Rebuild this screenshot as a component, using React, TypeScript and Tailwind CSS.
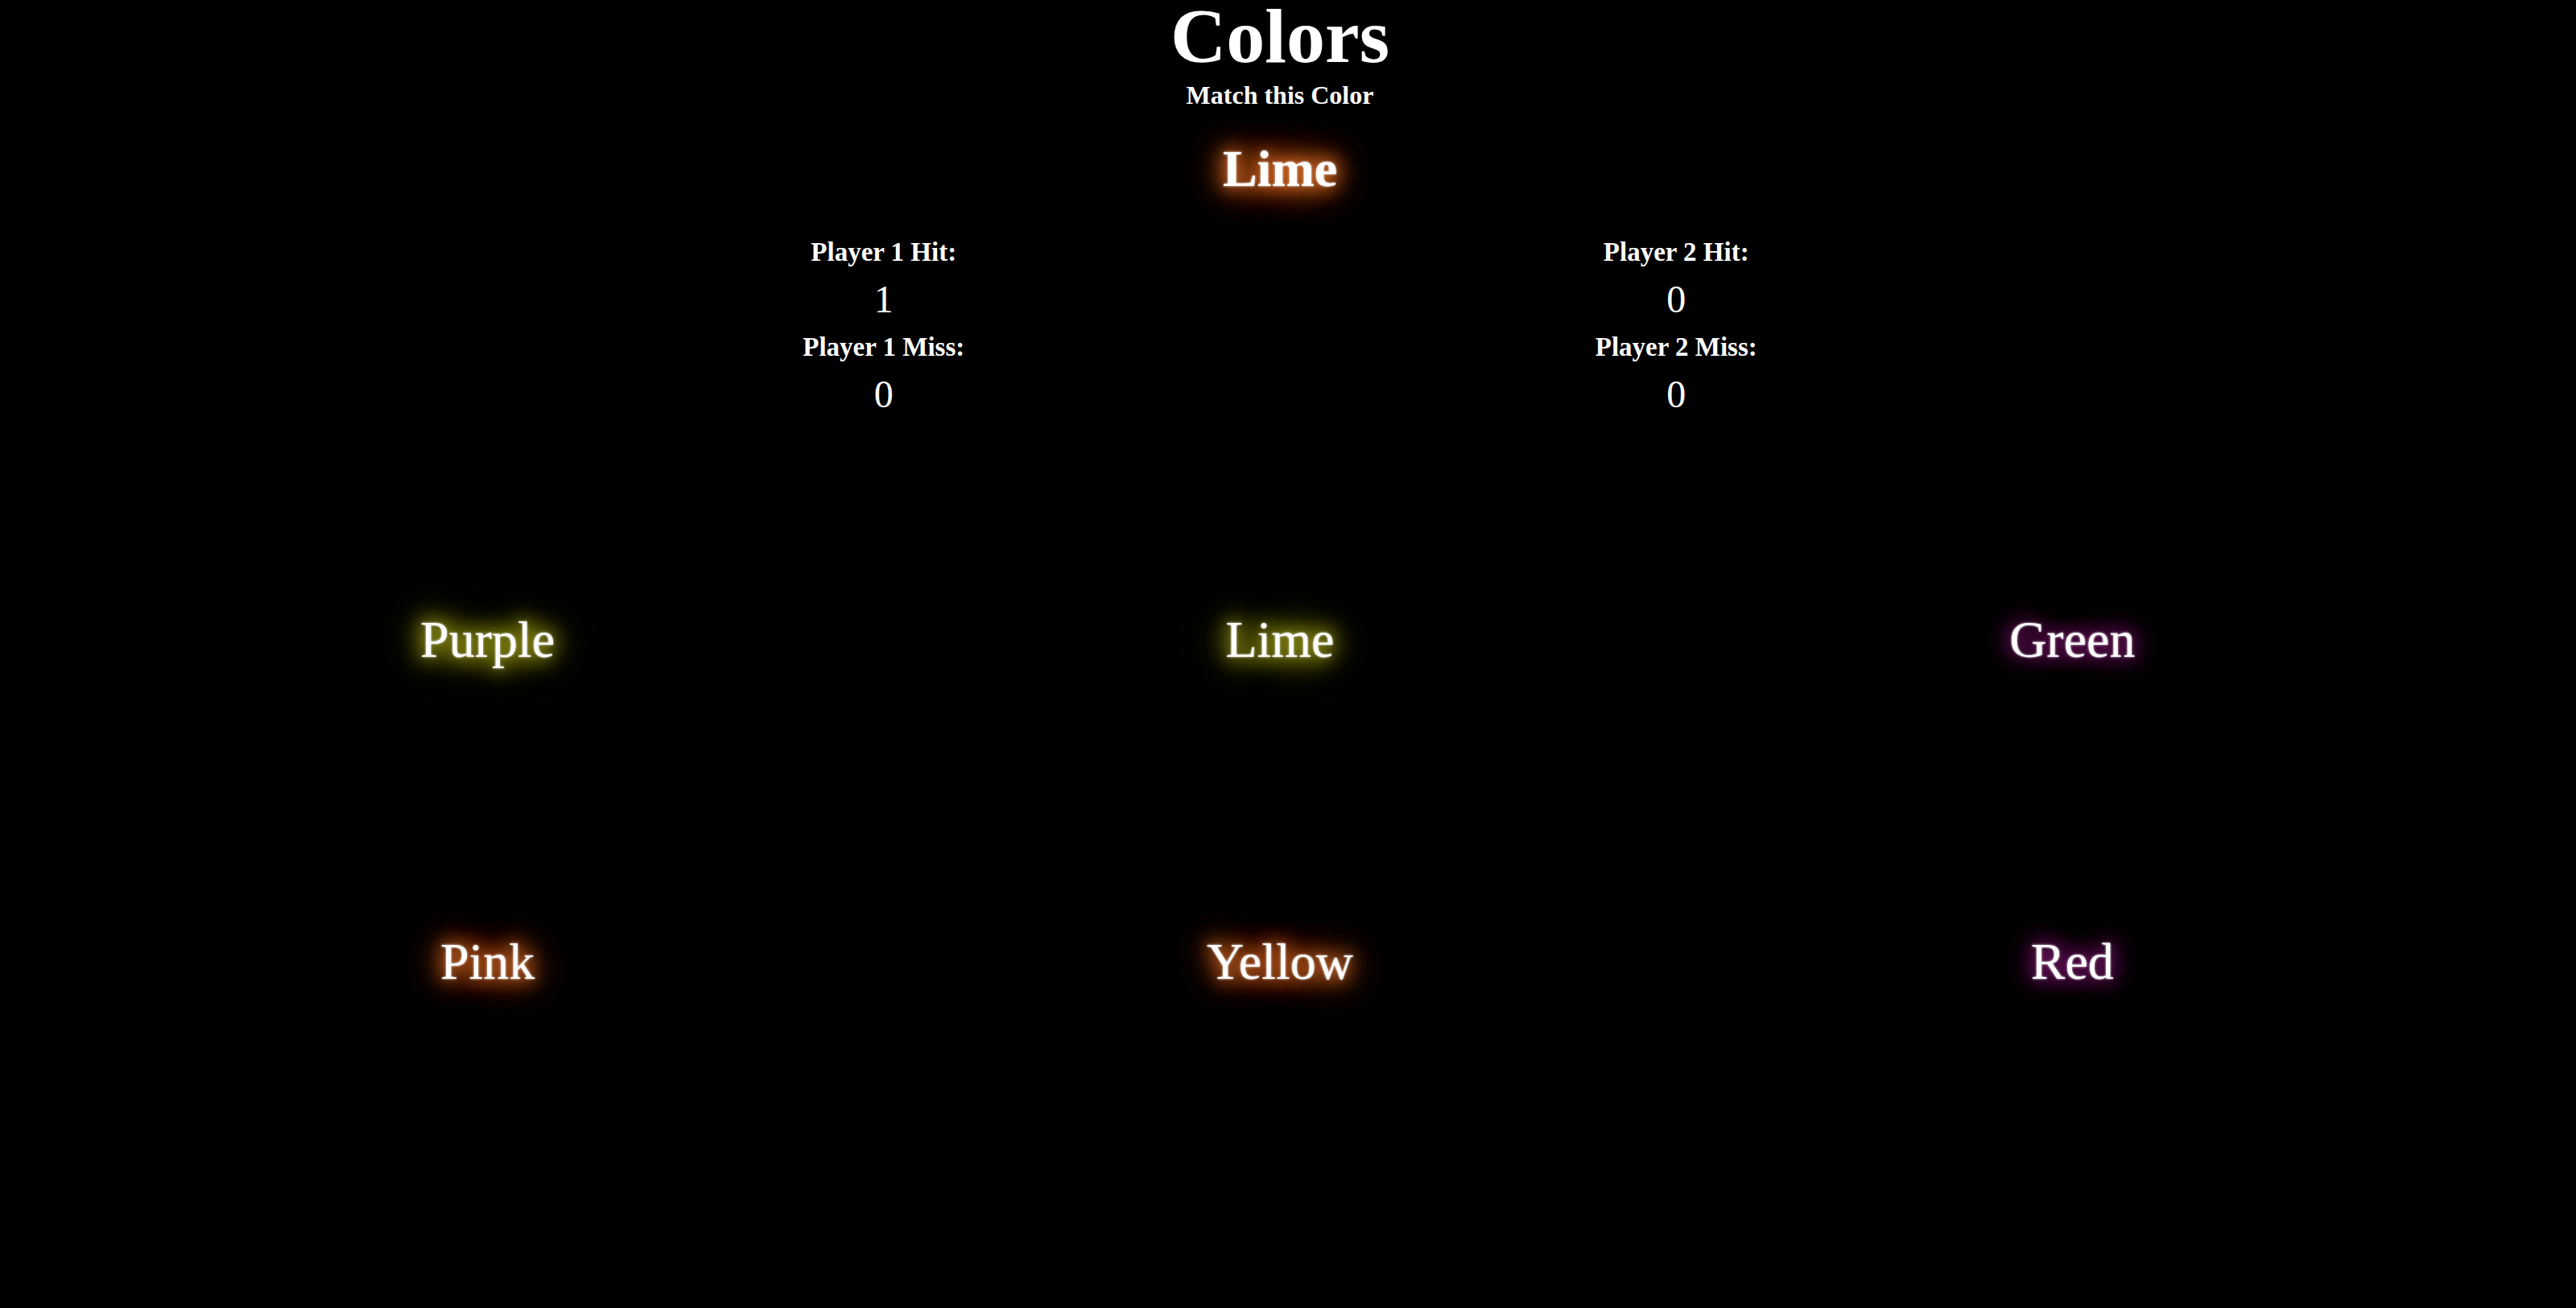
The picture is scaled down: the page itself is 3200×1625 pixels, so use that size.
const yellowGlow = "[text-shadow:0_0_3px_#fff,0_0_20px_#b0b020,0_0_30px_#a8a820,0_0_42px_#a0a018,0_0_56px_#808010,0_0_72px_#606008,0_0_90px_#404000]";
const orangeGlow = "[text-shadow:0_0_3px_#fff,0_0_20px_#e87430,0_0_30px_#e06e24,0_0_42px_#c86018,0_0_56px_#a04810,0_0_72px_#703008,0_0_90px_#481c00]";
const purpleGlow = "[text-shadow:0_0_3px_#fff,0_0_20px_#801c72,0_0_30px_#78166a,0_0_42px_#6a125e,0_0_56px_#500e4a,0_0_72px_#380a34,0_0_90px_#240620]";

const grid = [
  { word: "Purple", glow: yellowGlow },
  { word: "Lime", glow: yellowGlow },
  { word: "Green", glow: purpleGlow },
  { word: "Pink", glow: orangeGlow },
  { word: "Yellow", glow: orangeGlow },
  { word: "Red", glow: purpleGlow },
];

const players = [
  { name: "Player 1", hit: 1, miss: 0 },
  { name: "Player 2", hit: 0, miss: 0 },
];

export default function App() {
  return (
    <div className="min-h-[1625px] w-full bg-black text-white font-['Liberation_Serif',serif]">
      <div className="w-[3180px] flex flex-col items-center">
        <h1 className="text-[96px] font-bold leading-[90px]">Colors</h1>
        <h3 className="text-[32px] font-bold leading-[56px]">Match this Color</h3>
        <h2 className={`mt-[24px] text-[64px] font-bold leading-[80px] ${orangeGlow}`}>Lime</h2>

        <div className="mt-[37px] w-[1969px] grid grid-cols-2">
          {players.map((p) => (
            <div key={p.name} className="flex flex-col items-center">
              <div className="text-[33px] font-bold leading-[52px]">{p.name} Hit:</div>
              <div className="text-[48px] leading-[66px]">{p.hit}</div>
              <div className="text-[33px] font-bold leading-[52px]">{p.name} Miss:</div>
              <div className="text-[48px] leading-[66px]">{p.miss}</div>
            </div>
          ))}
        </div>

        <div className="mt-[72px] w-[2953px] grid grid-cols-3 auto-rows-[400px]">
          {grid.map((g) => (
            <div key={g.word} className="flex items-center justify-center">
              <span className={`text-[64px] leading-[100px] cursor-pointer ${g.glow}`}>{g.word}</span>
            </div>
          ))}
        </div>
      </div>
    </div>
  );
}
